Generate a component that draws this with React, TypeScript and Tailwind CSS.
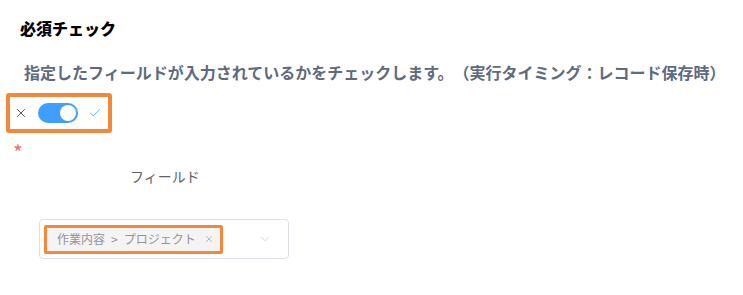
import React from "react";
import { X, Check, ChevronDown } from "lucide-react";

const font = "font-['Noto_Sans_CJK_JP',_'Noto_Sans',_sans-serif] [text-spacing-trim:space-all]";

const App = () => {
  return (
    <div className={`w-[743px] h-[295px] bg-white ${font}`}>
      <div className="pt-[16px]">
        <h3 className="ml-[20px] h-[24px] text-[16px] leading-[24px] font-black text-black">
          必須チェック
        </h3>
        <p className="ml-[24px] mt-[20px] h-[24px] text-[16px] leading-[24px] font-bold text-[#5e6a7d] whitespace-nowrap">
          指定したフィールドが入力されているかをチェックします。（実行タイミング：レコード保存時）
        </p>

        {/* toggle, outlined */}
        <div className="ml-[6px] mt-[9px] w-[106px] h-[40px] border-[4px] border-[#f5873a] rounded-[3px] flex items-center pl-[4px]">
          <X size={14} strokeWidth={1.4} className="text-[#303133]" />
          <div className="ml-[10px] w-[40px] h-[20px] rounded-full bg-[#409eff] flex items-center justify-end pr-[2px]">
            <div className="w-[16px] h-[16px] rounded-full bg-white" />
          </div>
          <Check size={14} strokeWidth={1.4} className="ml-[10px] text-[#409eff]" />
        </div>

        <div className="ml-[13px] mt-[10px] h-[12px] text-[21px] leading-[18px] text-[#f56c6c]">*</div>

        <div className="ml-[130px] mt-[11px] h-[20px] text-[14px] leading-[20px] text-[#606266]">
          フィールド
        </div>

        <div className="ml-[39px] mt-[33px] w-[250px] h-[40px] border border-[#dcdfe6] rounded-[4px] flex items-center pl-[4px] pr-[16px]">
          <div className="h-[29px] border-[3px] border-[#f5873a] rounded-[2px] bg-[#f4f4f5] flex items-center pl-[10px] pr-[6px] w-[179px]">
            <span className="text-[12px] text-[#909399] whitespace-nowrap">
              作業内容<span className="mx-[6px]">&gt;</span>プロジェクト
            </span>
            <X size={10} strokeWidth={1.5} className="ml-auto text-[#909399]" />
          </div>
          <ChevronDown size={14} strokeWidth={1.2} className="ml-auto text-[#c0c4cc]" />
        </div>
      </div>
    </div>
  );
};

export default App;
